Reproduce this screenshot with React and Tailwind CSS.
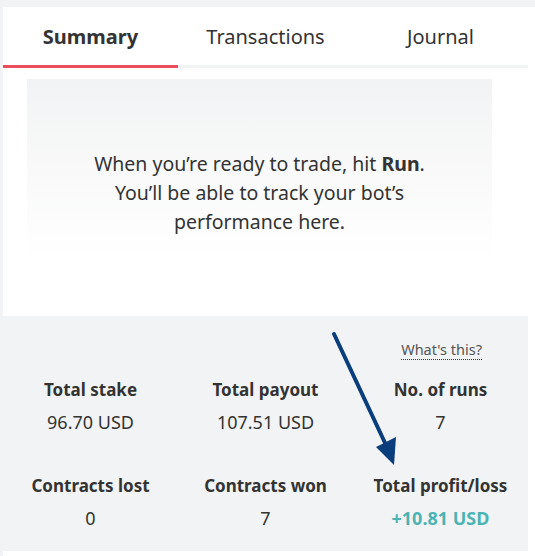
import React from 'react';

const tabs = ['Summary', 'Transactions', 'Journal'];

const stats = [
    { label: 'Total stake', value: '96.70 USD' },
    { label: 'Total payout', value: '107.51 USD' },
    { label: 'No. of runs', value: '7' },
    { label: 'Contracts lost', value: '0' },
    { label: 'Contracts won', value: '7' },
    { label: 'Total profit/loss', value: '+10.81 USD', profit: true },
];

export default function App() {
    return (
        <div className="relative w-[535px] h-[556px] bg-[#f2f3f4] pt-[7px] pl-[3px] text-[#333333]" style={{ fontFamily: '"Noto Sans", "Open Sans", sans-serif' }}>
            <div className="bg-white h-[549px] pr-[7px] flex flex-col">
                {/* Tabs */}
                <div className="flex border-b-[3px] border-[#f2f3f4]">
                    {tabs.map((t, i) => (
                        <div key={t} className={`flex-1 h-[61px] pt-[1px] flex items-center justify-center text-[20px] -mb-[3px] border-b-[3px] ${i === 0 ? 'font-bold border-[#ec4d5c]' : 'border-transparent'}`}>
                            {t}
                        </div>
                    ))}
                </div>

                {/* Empty state */}
                <div className="ml-[24px] mr-[36px] mt-[11px] h-[180px] bg-gradient-to-b from-[#f2f3f4] to-white pt-[70px]">
                    <p className="text-center text-[19.5px] leading-[29px]">
                        When you’re ready to trade, hit <b>Run</b>.<br />
                        You’ll be able to track your bot’s<br />
                        performance here.
                    </p>
                </div>

                <div className="flex-1" />

                {/* Stats */}
                <div className="h-[235px] bg-[#f2f3f4] mb-[5px] pt-[24px]">
                    <div className="flex justify-end pr-[46px]">
                        <span className="text-[14.5px] text-[#555] border-b border-dotted border-[#333] leading-[19px]">What's this?</span>
                    </div>
                    <div className="grid grid-cols-3 mt-[19px] gap-y-[41px]">
                        {stats.map(s => (
                            <div key={s.label} className="flex flex-col items-center">
                                <span className="text-[17px] font-bold leading-[22px]">{s.label}</span>
                                <span className={`text-[18px] leading-[24px] mt-[9px] ${s.profit ? 'font-bold text-[#4bb4b3]' : ''}`}>{s.value}</span>
                            </div>
                        ))}
                    </div>
                </div>
            </div>

            {/* Annotation arrow */}
            <svg className="absolute left-0 top-0 pointer-events-none" width="535" height="556" viewBox="0 0 535 556">
                <line x1="334" y1="334" x2="386" y2="445" stroke="#0a3d7c" strokeWidth="4" strokeLinecap="round" />
                <polygon points="376,447 396,437 394,465" fill="#0a3d7c" />
            </svg>
        </div>
    );
}
